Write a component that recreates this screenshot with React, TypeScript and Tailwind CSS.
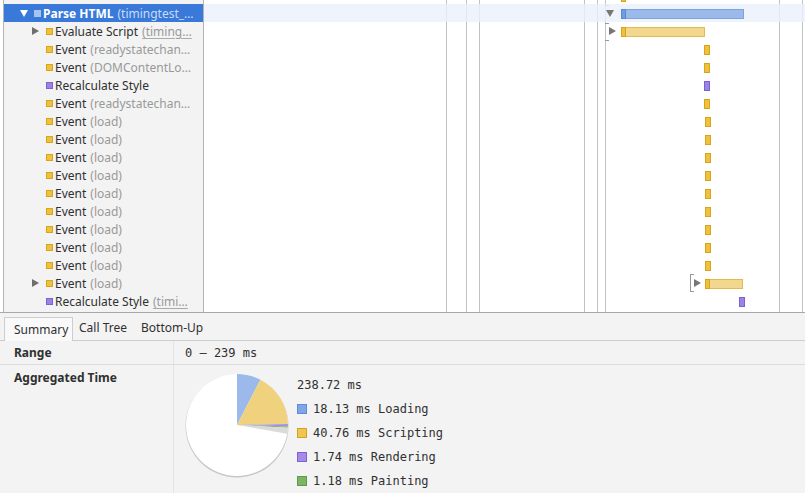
import React from "react";

type Row = {
  name: string;
  detail?: string;
  link?: boolean;
  level: number;
  kind: "blue" | "yellow" | "purple";
  expand?: "down" | "right";
  selected?: boolean;
};

type Bar = {
  left: number;
  width?: number;
  kind: "blue" | "yellow" | "purple";
  bracket?: number;
  arrow?: "down" | "right";
};

const rows: Row[] = [
  { name: "Parse HTML", detail: "(timingtest_…", level: 0, kind: "blue", expand: "down", selected: true },
  { name: "Evaluate Script", detail: "(timing…", link: true, level: 1, kind: "yellow", expand: "right" },
  { name: "Event", detail: "(readystatechan…", level: 1, kind: "yellow" },
  { name: "Event", detail: "(DOMContentLo…", level: 1, kind: "yellow" },
  { name: "Recalculate Style", level: 1, kind: "purple" },
  { name: "Event", detail: "(readystatechan…", level: 1, kind: "yellow" },
  ...Array.from({ length: 9 }, () => ({ name: "Event", detail: "(load)", level: 1, kind: "yellow" as const })),
  { name: "Event", detail: "(load)", level: 1, kind: "yellow", expand: "right" },
  { name: "Recalculate Style", detail: "(timi…", link: true, level: 1, kind: "purple" },
];

// x positions relative to the left edge of the timeline canvas
const bars: Bar[] = [
  { left: 417, width: 123, kind: "blue", arrow: "down" },
  { left: 417, width: 84, kind: "yellow", arrow: "right" },
  { left: 500, kind: "yellow" },
  { left: 500, kind: "yellow" },
  { left: 500, kind: "purple" },
  { left: 500, kind: "yellow" },
  ...Array.from({ length: 9 }, () => ({ left: 501, kind: "yellow" as const })),
  { left: 501, width: 38, kind: "yellow", bracket: 486, arrow: "right" },
  { left: 535, kind: "purple" },
];

const gridLines = [242, 262, 275, 380, 393, 401, 575, 598];

const square = {
  blue: "bg-[#a9c3ef] border-[#a9c3ef]",
  yellow: "bg-[#f0c13c] border-[#d6a51c]",
  purple: "bg-[#9b80e6] border-[#7e62cf]",
};

function TreeRow({ row }: { row: Row }) {
  const sel = row.selected;
  return (
    <div
      className={`h-[18px] flex items-center whitespace-nowrap overflow-hidden ${sel ? "bg-[#3879d9]" : ""}`}
      style={{ paddingLeft: 16 + row.level * 12 }}
    >
      <div className="w-[14px] flex items-center">
        {row.expand === "down" && (
          <div className="w-0 h-0 border-l-[4px] border-r-[4px] border-t-[7px] border-l-transparent border-r-transparent border-t-white" />
        )}
        {row.expand === "right" && (
          <div className="w-0 h-0 border-t-[4px] border-b-[4px] border-l-[7px] border-t-transparent border-b-transparent border-l-[#6e6e6e]" />
        )}
      </div>
      <div className={`w-[7px] h-[7px] border ${square[row.kind]}`} />
      <span className={`ml-[2px] translate-y-px ${sel ? "text-white font-bold" : "text-[#303030]"}`}>{row.name}</span>
      {row.detail && (
        <span
          className={`ml-[4px] translate-y-px ${sel ? "text-[#c9dbf6]" : "text-[#999]"} ${
            row.link ? "underline decoration-[#aaa] underline-offset-2" : ""
          }`}
        >
          {row.detail}
        </span>
      )}
    </div>
  );
}

function TimelineBar({ bar }: { bar: Bar }) {
  const w = bar.width ?? 6;
  const long = !!bar.width;
  const fill =
    bar.kind === "blue"
      ? "bg-[#9bbaeb] border-[#7fa2dc]"
      : bar.kind === "purple"
      ? "bg-[#9d83e8] border-[#7b60cf]"
      : long
      ? "bg-[#f2d88f] border-[#e4bb4c]"
      : "bg-[#f0c13c] border-[#d6a51c]";
  const self =
    bar.kind === "blue" ? "bg-[#6f9ce2] border-[#5b88d2]" : "bg-[#efc03a] border-[#d6a51c]";
  return (
    <>
      {bar.bracket !== undefined && (
        <div
          className="absolute top-0 h-[18px] w-[4px] border border-r-0 border-[#999]"
          style={{ left: bar.bracket }}
        />
      )}
      {bar.arrow === "down" && (
        <div
          className="absolute top-[6px] w-0 h-0 border-l-[4px] border-r-[4px] border-t-[7px] border-l-transparent border-r-transparent border-t-[#777]"
          style={{ left: bar.left - 15 }}
        />
      )}
      {bar.arrow === "right" && (
        <div
          className="absolute top-[5px] w-0 h-0 border-t-[4px] border-b-[4px] border-l-[7px] border-t-transparent border-b-transparent border-l-[#777]"
          style={{ left: bar.left - (bar.bracket !== undefined ? 11 : 12) }}
        />
      )}
      <div
        className={`absolute top-[5px] h-[10px] border ${fill}`}
        style={{ left: bar.left, width: w }}
      />
      {long && (
        <div className={`absolute top-[5px] h-[10px] w-[5px] border ${self}`} style={{ left: bar.left }} />
      )}
    </>
  );
}

function polar(cx: number, cy: number, r: number, deg: number) {
  const a = ((deg - 90) * Math.PI) / 180;
  return [cx + r * Math.cos(a), cy + r * Math.sin(a)];
}

function slice(from: number, to: number) {
  const [x1, y1] = polar(52, 52, 50, from);
  const [x2, y2] = polar(52, 52, 50, to);
  const large = to - from > 180 ? 1 : 0;
  return `M52 52 L${x1} ${y1} A50 50 0 ${large} 1 ${x2} ${y2} Z`;
}

function Pie() {
  const total = 238.72;
  const parts = [
    { v: 18.13, c: "#9bbaeb" },
    { v: 40.76, c: "#efd17e" },
    { v: 1.74, c: "#a98de9" },
    { v: 1.18, c: "#84bb6c" },
    { v: 4.5, c: "#dadada" },
  ];
  let start = 0;
  return (
    <svg width="106" height="106" viewBox="0 0 104 104" className="shrink-0">
      <circle cx="52" cy="53" r="50.5" fill="#c8c8c8" />
      <circle cx="52" cy="52" r="50" fill="#ffffff" />
      {parts.map((p, i) => {
        const deg = (p.v / total) * 360;
        const d = slice(start, start + deg);
        start += deg;
        return <path key={i} d={d} fill={p.c} />;
      })}
    </svg>
  );
}

const legend = [
  { text: "18.13 ms Loading", c: "bg-[#7ea6e8] border-[#5e8ad6]" },
  { text: "40.76 ms Scripting", c: "bg-[#efc650] border-[#d3a424]" },
  { text: "1.74 ms Rendering", c: "bg-[#a58ae9] border-[#7f62d2]" },
  { text: "1.18 ms Painting", c: "bg-[#7cb566] border-[#5f9a4a]" },
];

export default function App() {
  return (
    <div
      className="w-[805px] h-[493px] overflow-hidden bg-white text-[12px] flex flex-col"
      style={{ fontFamily: '"Noto Sans", "Liberation Sans", sans-serif' }}
    >
      {/* flame / tree area */}
      <div className="h-[312px] flex shrink-0">
        <div className="w-[3px] bg-white" />
        <div className="w-[201px] bg-[#f3f3f3] border-l border-r border-[#b4b4b4] pt-[4px] leading-[18px]">
          {rows.map((r, i) => (
            <TreeRow key={i} row={r} />
          ))}
        </div>
        <div className="flex-1 relative bg-white">
          {gridLines.map((x) => (
            <div key={x} className="absolute top-0 bottom-0 w-px bg-[#c2c2c2]" style={{ left: x }} />
          ))}
          <div className="absolute top-[5px] w-[4px] h-px bg-[#999]" style={{ left: 401 }} />
          <div className="absolute top-[23px] w-[4px] h-px bg-[#999]" style={{ left: 401 }} />
          <div className="absolute top-[40px] w-[4px] h-px bg-[#999]" style={{ left: 401 }} />
          <div className="relative flex flex-col">
            <div className="h-[4px] relative overflow-hidden">
              <div className="absolute top-[-8px] left-[417px] w-[5px] h-[10px] border bg-[#f0c13c] border-[#d6a51c]" />
            </div>
            {bars.map((b, i) => (
              <div key={i} className={`h-[18px] relative ${i === 0 ? "bg-[#ebf1fb]/80" : ""}`}>
                <TimelineBar bar={b} />
              </div>
            ))}
          </div>
        </div>
      </div>

      {/* details */}
      <div className="flex-1 bg-[#f3f3f3] border-t border-[#a8a8a8] flex flex-col text-[#303030]">
        <div className="h-[28px] flex items-end px-[4px] border-b border-[#cdcdcd] shrink-0">
          <div className="h-[24px] w-[69px] pl-[9px] flex items-center bg-[#f9f9f9] border border-b-0 border-[#cdcdcd] -mb-px">
            Summary
          </div>
          <div className="h-[24px] w-[62px] pl-[6px] flex items-center">Call Tree</div>
          <div className="h-[24px] pl-[6px] flex items-center">Bottom-Up</div>
        </div>
        <div className="h-[24px] flex border-b border-[#dcdcdc] shrink-0">
          <div className="w-[174px] pl-[14px] flex items-center font-bold border-r border-[#e2e2e2]">Range</div>
          <div
            className="pl-[11px] flex items-center"
            style={{ fontFamily: '"DejaVu Sans Mono", monospace' }}
          >
            0 – 239 ms
          </div>
        </div>
        <div className="flex-1 flex">
          <div className="w-[174px] pl-[14px] pt-[4px] font-bold border-r border-[#e2e2e2]">Aggregated Time</div>
          <div className="flex pl-[10px] pt-[7px] gap-[7px]" style={{ fontFamily: '"DejaVu Sans Mono", monospace' }}>
            <Pie />
            <div className="flex flex-col pt-[1px] leading-[24px]">
              <div>238.72 ms</div>
              {legend.map((l) => (
                <div key={l.text} className="flex items-center gap-[6px]">
                  <div className={`w-[10px] h-[10px] border ${l.c}`} />
                  <span>{l.text}</span>
                </div>
              ))}
            </div>
          </div>
        </div>
      </div>
    </div>
  );
}
